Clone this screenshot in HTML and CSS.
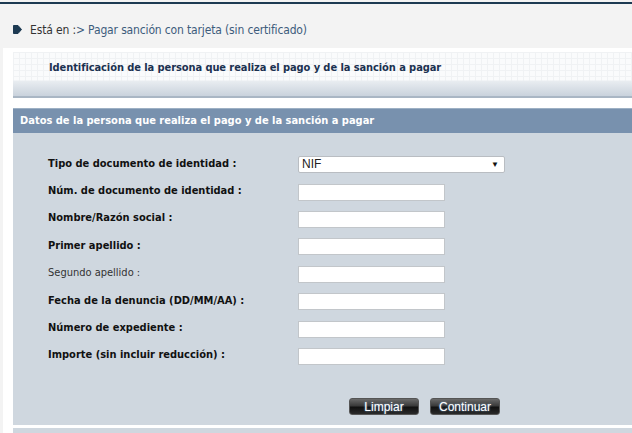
FILE: index.html
```html
<!DOCTYPE html>
<html lang="es">
<head>
    <meta charset="UTF-8">
    <title>Pagar sanción con tarjeta</title>
    <link rel="stylesheet" href="styles.css">
</head>
<body>
    <div class="topline"></div>
    <div class="breadcrumb">
        <svg class="bullet" width="9" height="9" viewBox="0 0 9 9">
            <path d="M0.5 0.5 H5 L8.5 4.5 L5 8.5 H0.5 Z" fill="#1d3a52" stroke="#1d3a52" stroke-linejoin="round"/>
        </svg>
        <span class="here">Está en :</span><span class="path">&gt; Pagar sanción con tarjeta (sin certificado)</span>
    </div>
    <div class="main">
        <div class="title-box">
            <h2>Identificación de la persona que realiza el pago y de la sanción a pagar</h2>
        </div>
        <div class="section">
            <div class="section-head">Datos de la persona que realiza el pago y de la sanción a pagar</div>
            <div class="section-body">
                <div class="form-row">
                    <label class="req">Tipo de documento de identidad :</label>
                    <div class="select">NIF<span class="caret">&#9660;</span></div>
                </div>
                <div class="form-row">
                    <label class="req">Núm. de documento de identidad :</label>
                    <input type="text">
                </div>
                <div class="form-row">
                    <label class="req">Nombre/Razón social :</label>
                    <input type="text">
                </div>
                <div class="form-row">
                    <label class="req">Primer apellido :</label>
                    <input type="text">
                </div>
                <div class="form-row">
                    <label>Segundo apellido :</label>
                    <input type="text">
                </div>
                <div class="form-row">
                    <label class="req">Fecha de la denuncia (DD/MM/AA) :</label>
                    <input type="text">
                </div>
                <div class="form-row">
                    <label class="req">Número de expediente :</label>
                    <input type="text">
                </div>
                <div class="form-row">
                    <label class="req">Importe (sin incluir reducción) :</label>
                    <input type="text">
                </div>
                <div class="buttons">
                    <button>Limpiar</button>
                    <button>Continuar</button>
                </div>
            </div>
        </div>
        <div class="section-next"></div>
    </div>
</body>
</html>
```

FILE: styles.css
```css
body {
    margin: 0;
    background-color: #f3f3f3;
    font-family: "DejaVu Sans Condensed", "DejaVu Sans", Verdana, sans-serif;
    font-size: 11px;
    color: #222;
    overflow: hidden;
}
.topline {
    margin-top: 2px;
    height: 2px;
    background-color: #1d3a52;
}
.breadcrumb {
    height: 44px;
    padding-left: 13px;
    display: flex;
    align-items: center;
    font-size: 12px;
    letter-spacing: -0.15px;
    box-sizing: border-box;
    padding-top: 7px;
}
.bullet {
    margin-right: 8px;
    margin-top: -1px;
    flex: none;
}
.here {
    color: #333;
}
.path {
    color: #3d5c7c;
}
.main {
    margin-left: 3px;
    background-color: #fff;
    padding: 4px 0 0 10px;
}
.title-box {
    height: 44px;
    border-bottom: 2px solid #a9b6c4;
    background-color: #fafbfc;
    background-image:
        linear-gradient(to bottom, rgba(255, 255, 255, 0) 0, rgba(255, 255, 255, 0) 28px, #e9edf1 29px, #c9d2dc 44px),
        repeating-linear-gradient(to right, #f0f2f4 0, #f0f2f4 1px, transparent 1px, transparent 6px),
        repeating-linear-gradient(to bottom, #f0f2f4 0, #f0f2f4 1px, transparent 1px, transparent 6px);
}
.title-box h2 {
    margin: 0;
    padding: 9px 0 0 36px;
    font-size: 11px;
    font-weight: bold;
    letter-spacing: -0.08px;
    color: #1b3150;
}
.section {
    margin-top: 10px;
}
.section-head {
    height: 24px;
    line-height: 24px;
    padding-left: 7px;
    background-color: #7891ae;
    border-top: 1px solid #9db0c4;
    color: #fff;
    font-weight: bold;
}
.section-body {
    background-color: #cfd7df;
    padding: 18px 0 10px 35px;
}
.form-row {
    display: grid;
    grid-template-columns: 250px auto;
    align-items: center;
    height: 27.4px;
}
.form-row label {
    color: #333;
    margin-top: -3px;
}
.form-row label.req {
    font-weight: bold;
    color: #111;
}
.form-row input {
    width: 147px;
    height: 17px;
    box-sizing: border-box;
    border: 1px solid #c2c6ca;
    background-color: #fff;
    margin: 0;
    padding: 0 2px;
}
.select {
    width: 207px;
    height: 17px;
    box-sizing: border-box;
    border: 1px solid #b9bdc2;
    border-radius: 2px;
    background-color: #fff;
    font-family: "Liberation Sans", Arial, sans-serif;
    font-size: 12px;
    line-height: 15px;
    padding-left: 3px;
    color: #222;
    display: flex;
    justify-content: space-between;
}
.caret {
    font-size: 8px;
    margin-right: 5px;
    color: #111;
}
.buttons {
    display: flex;
    gap: 11px;
    padding: 28px 0 0 301px;
}
.buttons button {
    width: 70px;
    height: 17px;
    padding: 0;
    border: 1px solid #555;
    border-radius: 3px;
    background: linear-gradient(to bottom, #6a6a6a 0, #3a3a3a 45%, #111 55%, #2a2a2a 100%);
    color: #fff;
    font-family: "Liberation Sans", Arial, sans-serif;
    font-size: 12px;
    text-shadow: 0 0 2px #7fa7d0;
}
.section-next {
    margin-top: 3px;
    height: 10px;
    background-color: #cfd7df;
}
```
